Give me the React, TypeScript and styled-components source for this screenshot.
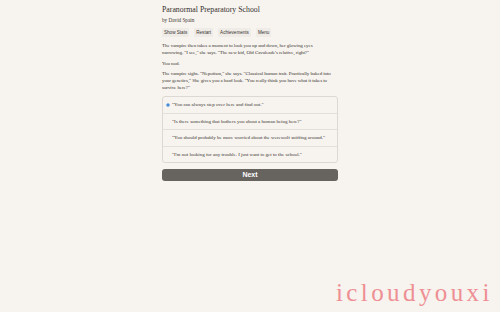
import React from "react";
import styled, { createGlobalStyle } from "styled-components";

const Global = createGlobalStyle`
  html, body { margin: 0; padding: 0; background: #f7f3ef; }
  body { width: 500px; height: 312px; overflow: hidden; font-family: "Liberation Serif", serif; color: #3a3632; }
`;

const Page = styled.div`
  position: relative;
  width: 500px;
  height: 312px;
  background: #f7f3ef;
`;

const Column = styled.div`
  width: 176px;
  margin-left: 162px;
  padding-top: 4px;
  display: flex;
  flex-direction: column;
`;

const Title = styled.h1`
  margin: 0;
  font-family: "Liberation Serif", serif;
  font-weight: normal;
  font-size: 7.8px;
  line-height: 11px;
  color: #33302d;
`;

const Byline = styled.div`
  font-size: 5.2px;
  line-height: 7px;
  margin-top: 2px;
`;

const Toolbar = styled.div`
  display: flex;
  gap: 5px;
  margin-top: 4px;
`;

const ToolButton = styled.button`
  border: none;
  background: #efebe7;
  border-radius: 1px;
  font-family: "Liberation Sans", sans-serif;
  font-size: 4.6px;
  line-height: 9px;
  height: 9px;
  padding: 0 2px;
  color: #3a3632;
`;

const Para = styled.p<{ $gap?: number }>`
  margin: 0;
  margin-top: ${(p) => p.$gap ?? 0}px;
  width: 170px;
  font-size: 5px;
  letter-spacing: -0.07px;
  line-height: 7px;
  color: #3a3632;
`;

const Choices = styled.div`
  margin-top: 5px;
  border: 1px solid #ddd8d3;
  border-radius: 3px;
  display: flex;
  flex-direction: column;
  overflow: hidden;
`;

const Choice = styled.label<{ $first?: boolean }>`
  display: flex;
  align-items: center;
  height: 15.5px;
  padding-left: 3px;
  border-top: ${(p) => (p.$first ? "none" : "1px solid #e4dfda")};
  font-size: 5px;
  color: #3a3632;
`;

const Radio = styled.span<{ $on?: boolean }>`
  width: 4px;
  height: 4px;
  border-radius: 50%;
  margin-right: 2px;
  box-sizing: border-box;
  background: ${(p) => (p.$on ? "#2a7ad2" : "transparent")};
  border: ${(p) => (p.$on ? "1px solid #8fb8e6" : "none")};
  flex: none;
`;

const NextButton = styled.button`
  margin-top: 6px;
  height: 12px;
  border: none;
  border-radius: 3px;
  background: #67635f;
  color: #ffffff;
  font-family: "Liberation Sans", sans-serif;
  font-weight: bold;
  font-size: 7px;
  line-height: 12px;
  padding: 0;
`;

const Watermark = styled.div`
  position: absolute;
  left: 336px;
  top: 279px;
  font-family: "Liberation Serif", serif;
  font-size: 25px;
  letter-spacing: 3.4px;
  color: #ee8f93;
`;

export default function App() {
  return (
    <Page>
      <Global />
      <Column>
        <Title>Paranormal Preparatory School</Title>
        <Byline>by David Spain</Byline>
        <Toolbar>
          <ToolButton>Show Stats</ToolButton>
          <ToolButton>Restart</ToolButton>
          <ToolButton>Achievements</ToolButton>
          <ToolButton>Menu</ToolButton>
        </Toolbar>
        <Para $gap={5}>
          The vampire then takes a moment to look you up and down, her glowing eyes narrowing. "I see," she says. "The new kid, Old Cavaleade's relative, right?"
        </Para>
        <Para $gap={4}>You nod.</Para>
        <Para $gap={3}>
          The vampire sighs. "Nepotism," she says. "Classical human trait. Practically baked into your genetics," She gives you a hard look. "You really think you have what it takes to survive here?"
        </Para>
        <Choices>
          <Choice $first>
            <Radio $on />"You can always step over here and find out."
          </Choice>
          <Choice>
            <Radio />"Is there something that bothers you about a human being here?"
          </Choice>
          <Choice>
            <Radio />"You should probably be more worried about the werewolf sniffing around."
          </Choice>
          <Choice>
            <Radio />"I'm not looking for any trouble. I just want to get to the school."
          </Choice>
        </Choices>
        <NextButton>Next</NextButton>
      </Column>
      <Watermark>icloudyouxi</Watermark>
    </Page>
  );
}
